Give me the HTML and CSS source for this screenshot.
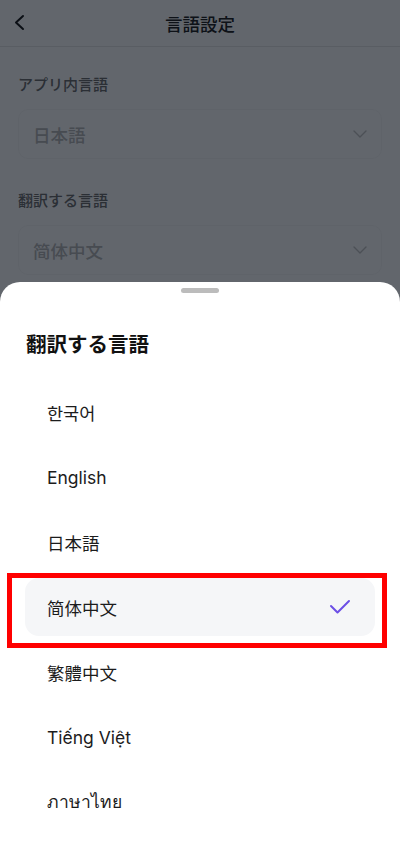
FILE: index.html
```html
<!DOCTYPE html>
<html lang="ja">
<head>
  <meta charset="UTF-8" />
  <meta name="viewport" content="width=device-width, initial-scale=1.0"/>
  <title>言語設定</title>
  <link rel="stylesheet" href="styles.css">
</head>
<body>
  <div class="settings-page">
    <header class="top-bar">
      <button class="back-btn" aria-label="戻る">
        <svg width="12" height="18" viewBox="0 0 12 18"><polyline points="9,2 2,8.5 9,15" fill="none" stroke="#1c1c1c" stroke-width="2" stroke-linecap="round" stroke-linejoin="round"/></svg>
      </button>
      <h1>言語設定</h1>
    </header>

    <main class="settings-list">
      <section class="setting">
        <p class="setting-label">アプリ内言語</p>
        <div class="select-box">
          <span>日本語</span>
          <svg width="14" height="8" viewBox="0 0 14 8"><polyline points="1,1 7,7 13,1" fill="none" stroke="#c4c4c4" stroke-width="1.4" stroke-linecap="round" stroke-linejoin="round"/></svg>
        </div>
      </section>
      <section class="setting">
        <p class="setting-label">翻訳する言語</p>
        <div class="select-box">
          <span>简体中文</span>
          <svg width="14" height="8" viewBox="0 0 14 8"><polyline points="1,1 7,7 13,1" fill="none" stroke="#c4c4c4" stroke-width="1.4" stroke-linecap="round" stroke-linejoin="round"/></svg>
        </div>
      </section>
    </main>
  </div>

  <div class="overlay"></div>

  <div class="sheet">
    <div class="sheet-handle"></div>
    <h2 class="sheet-title">翻訳する言語</h2>
    <ul class="lang-list">
      <li class="lang-item" lang="ko">한국어</li>
      <li class="lang-item" lang="en">English</li>
      <li class="lang-item" lang="ja">日本語</li>
      <li class="lang-item selected" lang="zh-Hans">
        <span>简体中文</span>
        <svg width="22" height="16" viewBox="0 0 22 16"><polyline points="2,7 8.5,13.5 20,2" fill="none" stroke="#6c4fe6" stroke-width="2" stroke-linecap="round" stroke-linejoin="round"/></svg>
        <div class="highlight-frame"></div>
      </li>
      <li class="lang-item" lang="zh-Hant">繁體中文</li>
      <li class="lang-item" lang="vi">Tiếng Việt</li>
      <li class="lang-item" lang="th">ภาษาไทย</li>
    </ul>
  </div>
</body>
</html>
```

FILE: styles.css
```css
* {
  box-sizing: border-box;
  font-family: 'Inter', 'Noto Sans CJK JP', 'Noto Sans', sans-serif;
}

body {
  margin: 0;
  padding: 0;
  background: #fff;
  height: 100vh;
  overflow: hidden;
}

/* page behind the sheet */
.top-bar {
  position: relative;
  height: 47px;
  display: flex;
  align-items: center;
  justify-content: center;
  border-bottom: 1px solid #e6e6e6;
}

.top-bar h1 {
  margin: 0;
  font-size: 17.5px;
  font-weight: 500;
  color: #222;
}

.back-btn {
  position: absolute;
  left: 14px;
  top: 14px;
  padding: 0;
  border: none;
  background: none;
  display: flex;
}

.settings-list {
  padding: 28px 18px 0;
  display: flex;
  flex-direction: column;
  gap: 32px;
}

.setting-label {
  margin: 0 0 14px;
  font-size: 15px;
  line-height: 20px;
  font-weight: 500;
  color: #6e6e6e;
}

.select-box {
  height: 50px;
  border: 1px solid #f8f8f8;
  border-radius: 10px;
  padding: 0 14px 0 14px;
  display: flex;
  align-items: center;
  justify-content: space-between;
  font-size: 17.5px;
  font-weight: 500;
  color: #b8b8b8;
}

.overlay {
  position: fixed;
  inset: 0;
  background: rgba(2, 8, 18, 0.62);
}

/* bottom sheet */
.sheet {
  position: fixed;
  left: 0;
  right: 0;
  bottom: 0;
  top: 282px;
  background: #fff;
  border-radius: 20px 20px 0 0;
  padding: 6px 25px 0;
}

.sheet-handle {
  width: 38px;
  height: 5px;
  border-radius: 3px;
  background: #bcbcbc;
  margin: 0 auto;
}

.sheet-title {
  margin: 38px 0 0 1px;
  font-size: 20.5px;
  line-height: 28px;
  font-weight: 700;
  color: #111;
}

.lang-list {
  list-style: none;
  margin: 24px 0 0;
  padding: 0;
  display: flex;
  flex-direction: column;
  gap: 7px;
}

.lang-item {
  position: relative;
  height: 58px;
  padding: 0 24px 0 22px;
  display: flex;
  align-items: center;
  justify-content: space-between;
  font-size: 17.5px;
  color: #1c1c1c;
  border-radius: 14px;
}

.lang-item.selected {
  background: #f5f6f8;
}

.highlight-frame {
  position: absolute;
  left: -18px;
  top: -5px;
  width: 380px;
  height: 75px;
  border: 5px solid #ff0000;
}
```
